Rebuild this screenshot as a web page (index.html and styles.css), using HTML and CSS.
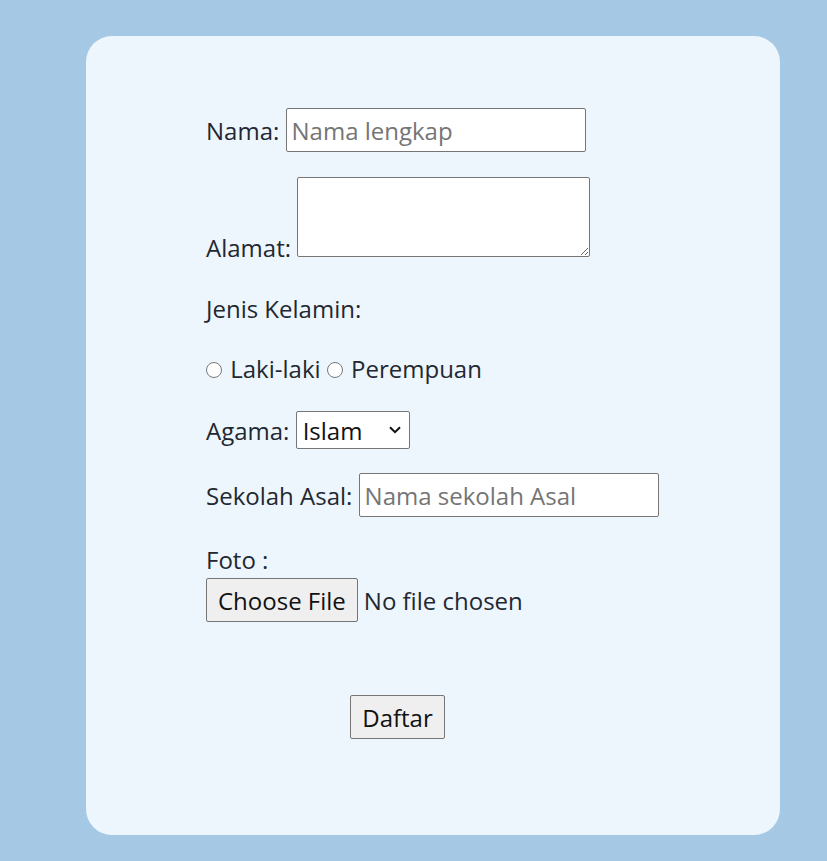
FILE: index.html
```html
<!DOCTYPE html>
<html>
<head>
<meta charset="utf-8">
<link rel="stylesheet" href="styles.css">
</head>
<body>
<div class="card">
  <form class="form">
    <div class="row r-nama">Nama: <input class="text" type="text" placeholder="Nama lengkap"></div>
    <div class="row r-alamat">Alamat: <textarea class="area"></textarea></div>
    <div class="row r-jk">Jenis Kelamin:</div>
    <div class="row r-radio"><input class="radio" type="radio" name="jk"> Laki-laki <input class="radio" type="radio" name="jk"> Perempuan</div>
    <div class="row r-agama">Agama: <select class="sel"><option>Islam</option><option>Kristen</option></select></div>
    <div class="row r-sekolah">Sekolah Asal: <input class="text" type="text" placeholder="Nama sekolah Asal"></div>
    <div class="row r-foto">Foto :<br><input class="file" type="file"></div>
    <div class="submit"><button class="btn" type="button">Daftar</button></div>
  </form>
</div>
</body>
</html>
```

FILE: styles.css
```css
html, body {
  margin: 0;
  padding: 0;
}
body {
  background: #a5c9e4;
  font-family: "Open Sans", sans-serif;
  font-size: 24px;
  color: #222831;
  padding: 36px 47px 26px 86px;
}
.card {
  background: #eef6fd;
  border-radius: 26px;
  height: 799px;
  box-sizing: border-box;
  padding: 72px 0 0 120px;
}
.form {
  margin: 0;
}
.row {
  margin-bottom: 26px;
}
.r-nama {
  margin-bottom: 25px;
}
.r-alamat {
  margin-bottom: 28px;
}
.r-jk {
  margin-bottom: 27px;
}
.r-radio {
  margin-bottom: 26px;
}
.r-agama {
  margin-bottom: 24px;
}
.text, .area, .sel, .file, .btn {
  font-family: "Open Sans", sans-serif;
  font-size: 24px;
  color: #111;
}
.file::file-selector-button {
  font-family: "Open Sans", sans-serif;
  font-size: 24px;
  color: #111;
  height: 44px;
  padding: 0 11px;
  margin-right: 6px;
  border: 1px solid #767676;
  border-radius: 2px;
  background: #efefef;
}
.text {
  width: 300px;
  height: 44px;
  box-sizing: border-box;
  border: 1px solid #767676;
  border-radius: 2px;
  padding: 1px 5px;
  margin: 0;
}
.area {
  width: 293px;
  height: 80px;
  box-sizing: border-box;
  margin: 0;
  border: 1px solid #767676;
  border-radius: 2px;
}
.radio {
  margin: 0 2px 0 0;
  width: 16px;
  height: 16px;
}
.sel {
  -webkit-appearance: none;
  appearance: none;
  box-sizing: border-box;
  width: 114px;
  height: 38px;
  margin: 0;
  padding: 0 24px 0 6px;
  border: 1px solid #767676;
  border-radius: 2px;
  background: #fff url("data:image/svg+xml,%3Csvg xmlns='http://www.w3.org/2000/svg' width='12' height='8' viewBox='0 0 12 8'%3E%3Cpath d='M1 1.2 L6 6.2 L11 1.2' fill='none' stroke='%23111' stroke-width='2'/%3E%3C/svg%3E") no-repeat right 8px center;
  background-size: 12px 8px;
  vertical-align: baseline;
}
.file {
  margin: 2px 0 0 0;
  color: #222831;
}
.submit {
  padding-left: 144px;
  margin-top: 73px;
}
.btn {
  width: 95px;
  height: 44px;
  margin: 0;
  border: 1px solid #767676;
  border-radius: 2px;
  background: #efefef;
}
```
